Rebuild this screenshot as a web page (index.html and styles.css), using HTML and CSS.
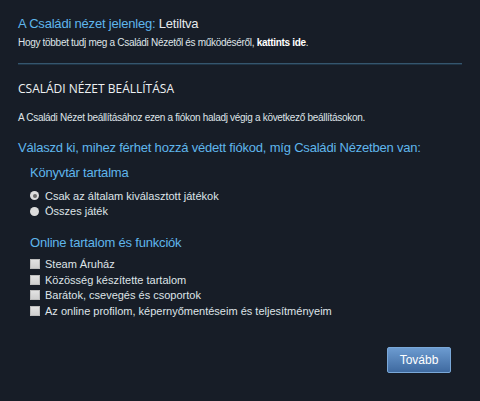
FILE: index.html
```html
<!DOCTYPE html>
<html lang="hu">
<head>
  <meta charset="UTF-8">
  <title>Családi Nézet</title>
  <link rel="stylesheet" href="styles.css">
</head>
<body>
  <div class="page">
    <div class="status">
      <div class="status-title">A Családi nézet jelenleg: <span class="state">Letiltva</span></div>
      <div class="status-desc">Hogy többet tudj meg a Családi Nézetől és működéséről, <a href="#" class="link">kattints ide</a>.</div>
    </div>

    <div class="divider"></div>

    <h2 class="section-title">Családi Nézet beállítása</h2>
    <p class="intro">A Családi Nézet beállításához ezen a fiókon haladj végig a következő beállításokon.</p>

    <div class="question">Válaszd ki, mihez férhet hozzá védett fiókod, míg Családi Nézetben van:</div>

    <div class="group">
      <div class="group-title">Könyvtár tartalma</div>
      <label class="option"><span class="radio checked"></span>Csak az általam kiválasztott játékok</label>
      <label class="option"><span class="radio"></span>Összes játék</label>
    </div>

    <div class="group group-online">
      <div class="group-title">Online tartalom és funkciók</div>
      <label class="option"><span class="check"></span>Steam Áruház</label>
      <label class="option"><span class="check"></span>Közösség készítette tartalom</label>
      <label class="option"><span class="check"></span>Barátok, csevegés és csoportok</label>
      <label class="option"><span class="check"></span>Az online profilom, képernyőmentéseim és teljesítményeim</label>
    </div>

    <div class="actions">
      <button class="btn">Tovább</button>
    </div>
  </div>
</body>
</html>
```

FILE: styles.css
```css
body {
  margin: 0;
  background: #171d27;
  font-family: "Liberation Sans", Arial, sans-serif;
  color: #dfe4e8;
}

.page {
  padding: 15px 18px 0 18px;
}

.status-title {
  font-size: 13px;
  line-height: 18px;
  letter-spacing: -0.2px;
  color: #5fb6ec;
}

.status-title .state {
  color: #e6e9ec;
}

.status-desc {
  font-size: 10px;
  line-height: 14px;
  letter-spacing: -0.3px;
  margin-top: 3px;
}

.link {
  color: #ffffff;
  font-weight: bold;
  text-decoration: none;
}

.divider {
  margin-top: 13px;
  height: 1px;
  background: #35566e;
  border-bottom: 1px solid #1f3344;
}

.section-title {
  margin: 16px 0 0 0;
  font-family: "Open Sans", "Noto Sans", sans-serif;
  font-size: 12px;
  font-weight: normal;
  line-height: 16px;
  text-transform: uppercase;
  color: #eef1f3;
}

.intro {
  margin: 14px 0 0 0;
  font-size: 10px;
  line-height: 14px;
  letter-spacing: -0.3px;
}

.question {
  margin-top: 14px;
  font-size: 13px;
  line-height: 18px;
  letter-spacing: -0.2px;
  color: #5fb6ec;
}

.group {
  padding-left: 12px;
  margin-top: 7px;
}

.group-title {
  font-size: 13px;
  line-height: 18px;
  letter-spacing: -0.2px;
  color: #5fb6ec;
  margin-bottom: 6px;
}

.group-online {
  margin-top: 15px;
}

.group-online .group-title {
  margin-bottom: 4px;
}

.option {
  display: flex;
  align-items: center;
  height: 15.6px;
  font-size: 11px;
  color: #dfe4e8;
}

.radio {
  width: 9px;
  height: 9px;
  border-radius: 50%;
  background: #dcdcdc;
  margin-right: 6px;
  display: flex;
  align-items: center;
  justify-content: center;
}

.radio.checked::after {
  content: "";
  width: 4px;
  height: 4px;
  border-radius: 50%;
  background: #6b6b6b;
}

.check {
  width: 8px;
  height: 8px;
  background: linear-gradient(#e2e2e2, #cfcfcf);
  border: 1px solid #bdbdbd;
  margin-right: 5px;
}

.actions {
  display: flex;
  justify-content: flex-end;
  padding-right: 11px;
  margin-top: 28px;
}

.btn {
  width: 64px;
  height: 26px;
  border: 1px solid #7aa8d8;
  border-radius: 2px;
  background: linear-gradient(#6c9bd0, #3f6aa0);
  color: #ffffff;
  font-family: "Liberation Sans", Arial, sans-serif;
  font-size: 12px;
  padding: 0;
}
```
